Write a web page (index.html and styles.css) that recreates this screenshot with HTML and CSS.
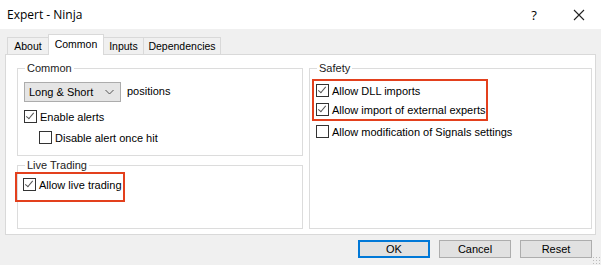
FILE: index.html
```html
<!DOCTYPE html>
<html lang="en">
<head>
    <meta charset="UTF-8">
    <title>Expert - Ninja</title>
    <link rel="stylesheet" href="styles.css">
</head>
<body>
    <div class="titlebar">
        <span class="title">Expert - Ninja</span>
        <span class="title-btn help">?</span>
        <span class="title-btn close">
            <svg width="12" height="12" viewBox="0 0 12 12"><path d="M1 1L11 11M11 1L1 11" stroke="#222" stroke-width="1.1" fill="none"/></svg>
        </span>
    </div>

    <div class="tabs">
        <div class="tab tab-about">About</div>
        <div class="tab tab-common active">Common</div>
        <div class="tab tab-inputs">Inputs</div>
        <div class="tab tab-deps">Dependencies</div>
    </div>

    <div class="panel">
        <div class="col left">
            <fieldset class="group common">
                <legend>Common</legend>
                <div class="row">
                    <div class="select">
                        <span>Long &amp; Short</span>
                        <svg width="9" height="6" viewBox="0 0 9 6"><path d="M0.5 1L4.5 5L8.5 1" stroke="#555" fill="none"/></svg>
                    </div>
                    <span class="after-select">positions</span>
                </div>
                <label class="check"><span class="box on"></span>Enable alerts</label>
                <label class="check indent"><span class="box"></span>Disable alert once hit</label>
            </fieldset>

            <fieldset class="group live">
                <legend>Live Trading</legend>
                <div class="mark mark-live">
                    <label class="check"><span class="box on"></span>Allow live trading</label>
                </div>
            </fieldset>
        </div>

        <div class="col right">
            <fieldset class="group safety">
                <legend>Safety</legend>
                <div class="mark mark-safety">
                    <label class="check"><span class="box on"></span>Allow DLL imports</label>
                    <label class="check"><span class="box on"></span>Allow import of external experts</label>
                </div>
                <label class="check last"><span class="box"></span>Allow modification of Signals settings</label>
            </fieldset>
        </div>
    </div>

    <div class="buttons">
        <button class="btn default">OK</button>
        <button class="btn">Cancel</button>
        <button class="btn">Reset</button>
    </div>
    <div class="grip"></div>
</body>
</html>
```

FILE: styles.css
```css
body {
    margin: 0;
    width: 601px;
    height: 265px;
    overflow: hidden;
    background: #f0f0f0;
    font-family: "Liberation Sans", Arial, sans-serif;
    font-size: 11px;
    color: #000;
    position: relative;
}

.titlebar {
    height: 29px;
    background: #fff;
    display: flex;
    align-items: center;
    padding-left: 7px;
}

.title {
    font-family: "Open Sans", sans-serif;
    font-size: 12px;
    flex: 1;
}

.title-btn {
    width: 44px;
    text-align: center;
    font-family: "Open Sans", sans-serif;
    font-size: 13px;
}

.help {
    margin-right: 1px;
}

.close {
    display: flex;
    justify-content: center;
}

.tabs {
    display: flex;
    align-items: flex-end;
    height: 25px;
    padding-left: 7px;
}

.tab {
    height: 16px;
    line-height: 16px;
    border: 1px solid #d9d9d9;
    border-bottom: none;
    background: #f0f0f0;
    margin-right: -1px;
    font-size: 10.5px;
    text-align: center;
    box-sizing: content-box;
}

.tab-about {
    width: 40px;
}

.tab-common {
    width: 54px;
}

.tab-inputs {
    width: 39px;
}

.tab-deps {
    width: 76px;
}

.tab.active {
    height: 20px;
    line-height: 18px;
    background: #fff;
    margin-bottom: -1px;
    position: relative;
    z-index: 1;
}

.panel {
    margin: 0 5px;
    background: #fff;
    border: 1px solid #d9d9d9;
    display: flex;
    gap: 6px;
    padding: 7px 3px 0 11px;
    box-sizing: border-box;
    height: 181px;
}

.col {
    display: flex;
    flex-direction: column;
}

.left {
    width: 287px;
    gap: 3px;
}

.right {
    width: 284px;
}

.group {
    margin: 0;
    border: 1px solid #dcdcdc;
    padding: 0 6px;
    min-width: 0;
}

.group legend {
    padding: 0 2px;
    margin-left: 1px;
    color: #222;
}

.common {
    height: 84px;
    padding-top: 8px;
}

.live {
    height: 68px;
    padding-top: 0;
}

.safety {
    height: 161px;
    padding-top: 4px;
}

.row {
    display: flex;
    align-items: center;
}

.select {
    width: 97px;
    height: 20px;
    border: 1px solid #acacac;
    background: #e5e5e5;
    display: flex;
    align-items: center;
    justify-content: space-between;
    padding: 0 6px 0 4px;
    box-sizing: border-box;
}

.after-select {
    margin-left: 6px;
    margin-top: -3px;
}

.check {
    display: flex;
    align-items: center;
    height: 13px;
    margin-top: 8px;
    white-space: nowrap;
}

.indent {
    margin-left: 15px;
}

.box {
    width: 11px;
    height: 11px;
    border: 1px solid #333;
    background: #fff;
    margin-right: 3px;
    position: relative;
    flex: none;
}

.box.on::after {
    content: "";
    position: absolute;
    left: 3px;
    top: 0px;
    width: 3px;
    height: 7px;
    border-right: 1.3px solid #555;
    border-bottom: 1.3px solid #555;
    transform: rotate(40deg);
}

.mark {
    border: 2px solid #e3401d;
}

.mark-live {
    width: 110px;
    height: 30px;
    margin-left: -9px;
    margin-top: 1px;
    padding-left: 6px;
    box-sizing: border-box;
}

.mark-live .check {
    margin-top: 4px;
}

.mark-safety {
    width: 176px;
    margin-left: -4px;
    margin-top: 1px;
    padding: 0 0 3px 2px;
    box-sizing: border-box;
}

.mark-safety .check:first-child {
    margin-top: 3px;
}

.mark-safety .check {
    margin-top: 6px;
}

.check.last {
    margin-top: 4px;
}

.buttons {
    display: flex;
    justify-content: flex-end;
    gap: 9px;
    padding: 5px 9px 0 0;
}

.btn {
    width: 72px;
    height: 18px;
    border: 1px solid #adadad;
    background: #e1e1e1;
    font-family: "Liberation Sans", Arial, sans-serif;
    font-size: 11px;
    padding: 0;
}

.btn.default {
    border: 2px solid #0078d7;
}

.grip {
    position: absolute;
    right: 1px;
    bottom: 1px;
    width: 8px;
    height: 8px;
    background-image: radial-gradient(circle, #bcbcbc 0.8px, transparent 1px);
    background-size: 3px 3px;
}
```
